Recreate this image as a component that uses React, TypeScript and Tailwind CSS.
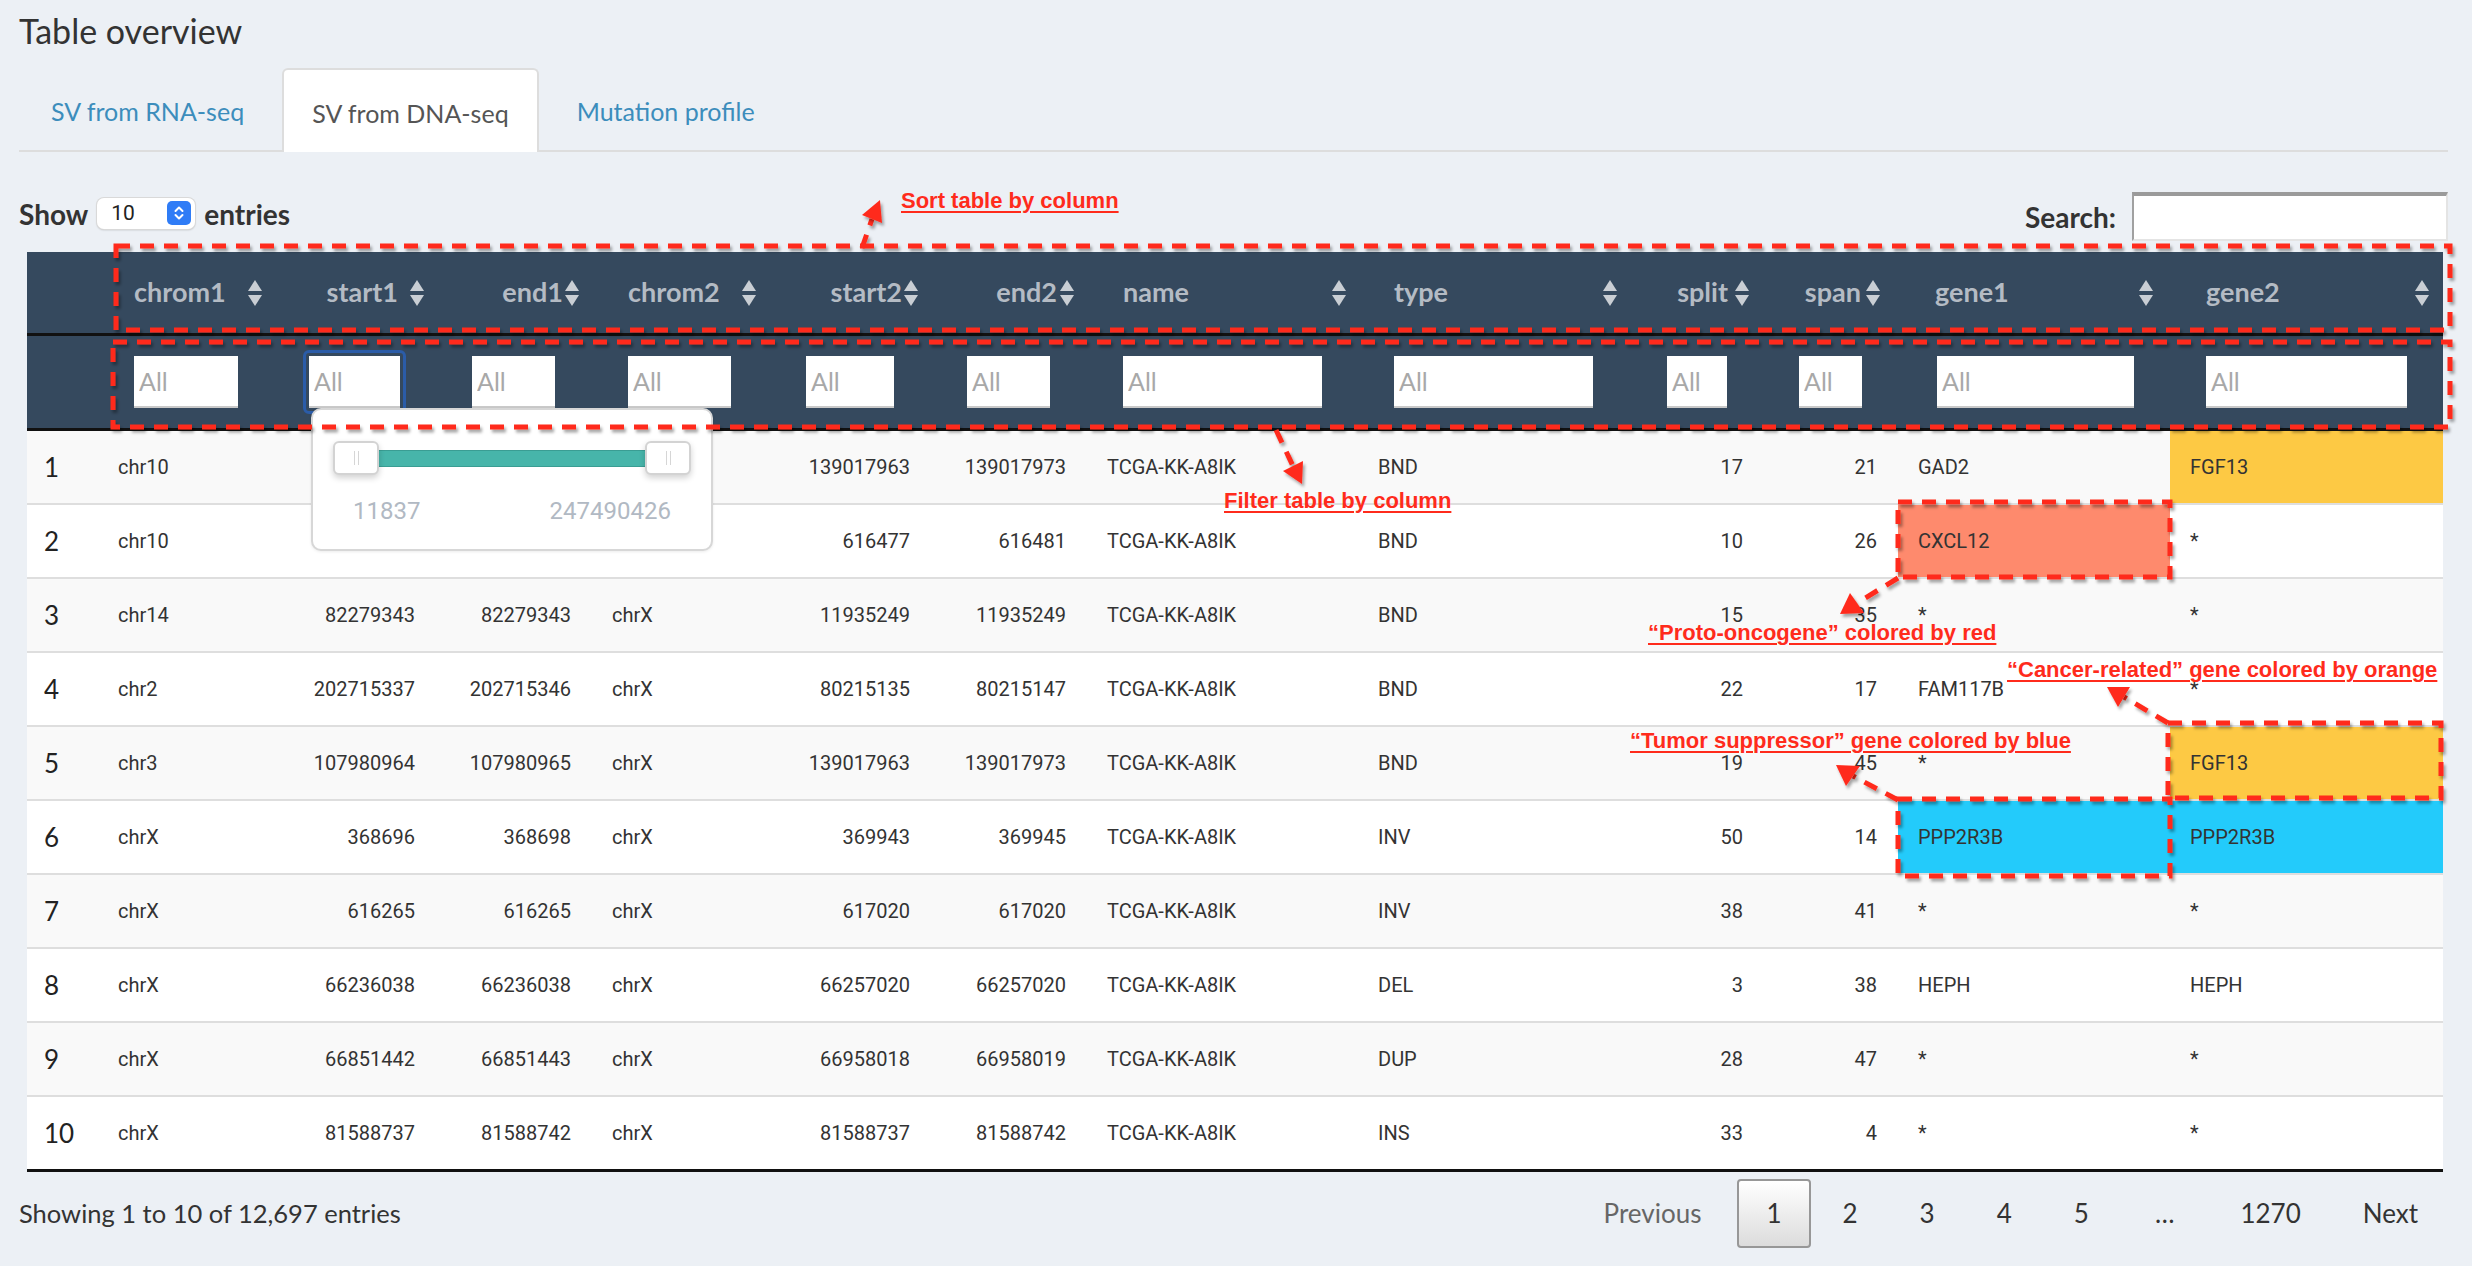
import React from "react";

const GRID =
  "grid grid-cols-[76px_181px_150px_162px_177px_154px_164px_272px_271px_126px_138px_272px_273px]";

type Col = {
  key: string;
  num: boolean;
  th: string;
  icon: string;
  td: string;
  input: string;
};

const COLS: Col[] = [
  { key: "chrom1", num: false, th: "pl-[31px]", icon: "right-[21px]", td: "pl-[15px]", input: "ml-[31px] w-[104px]" },
  { key: "start1", num: true, th: "pr-[36px]", icon: "right-[9px]", td: "pr-[19px]", input: "" },
  { key: "end1", num: true, th: "pr-[33px]", icon: "right-[16px]", td: "pr-[25px]", input: "ml-[38px] w-[83px]" },
  { key: "chrom2", num: false, th: "pl-[32px]", icon: "right-[16px]", td: "pl-[16px]", input: "ml-[32px] w-[103px]" },
  { key: "start2", num: true, th: "pr-[25px]", icon: "right-[8px]", td: "pr-[17px]", input: "ml-[33px] w-[88px]" },
  { key: "end2", num: true, th: "pr-[34px]", icon: "right-[16px]", td: "pr-[25px]", input: "ml-[40px] w-[83px]" },
  { key: "name", num: false, th: "pl-[32px]", icon: "right-[16px]", td: "pl-[16px]", input: "ml-[32px] w-[199px]" },
  { key: "type", num: false, th: "pl-[31px]", icon: "right-[16px]", td: "pl-[15px]", input: "ml-[31px] w-[199px]" },
  { key: "split", num: true, th: "pr-[32px]", icon: "right-[10px]", td: "pr-[17px]", input: "ml-[33px] w-[60px]" },
  { key: "span", num: true, th: "pr-[37px]", icon: "right-[17px]", td: "pr-[21px]", input: "ml-[39px] w-[63px]" },
  { key: "gene1", num: false, th: "pl-[37px]", icon: "right-[16px]", td: "pl-[20px]", input: "ml-[39px] w-[197px]" },
  { key: "gene2", num: false, th: "pl-[36px]", icon: "right-[13px]", td: "pl-[20px]", input: "ml-[36px] w-[201px]" },
];

const S = "TCGA-KK-A8IK";
const ROWS: string[][] = [
  ["chr10", "88941236", "88941240", "chrX", "139017963", "139017973", S, "BND", "17", "21", "GAD2", "FGF13"],
  ["chr10", "44865601", "44865603", "chrX", "616477", "616481", S, "BND", "10", "26", "CXCL12", "*"],
  ["chr14", "82279343", "82279343", "chrX", "11935249", "11935249", S, "BND", "15", "35", "*", "*"],
  ["chr2", "202715337", "202715346", "chrX", "80215135", "80215147", S, "BND", "22", "17", "FAM117B", "*"],
  ["chr3", "107980964", "107980965", "chrX", "139017963", "139017973", S, "BND", "19", "45", "*", "FGF13"],
  ["chrX", "368696", "368698", "chrX", "369943", "369945", S, "INV", "50", "14", "PPP2R3B", "PPP2R3B"],
  ["chrX", "616265", "616265", "chrX", "617020", "617020", S, "INV", "38", "41", "*", "*"],
  ["chrX", "66236038", "66236038", "chrX", "66257020", "66257020", S, "DEL", "3", "38", "HEPH", "HEPH"],
  ["chrX", "66851442", "66851443", "chrX", "66958018", "66958019", S, "DUP", "28", "47", "*", "*"],
  ["chrX", "81588737", "81588742", "chrX", "81588737", "81588742", S, "INS", "33", "4", "*", "*"],
];

// gene highlight colours: orange = cancer-related, salmon = proto-oncogene, blue = tumor suppressor
const HIGHLIGHT: Record<string, string> = {
  "0-11": "bg-[#fdc944]",
  "1-10": "bg-[#fe8a6d]",
  "4-11": "bg-[#fdc944]",
  "5-10": "bg-[#23cbfb]",
  "5-11": "bg-[#23cbfb]",
};

function SortIcon({ className = "" }: { className?: string }) {
  return (
    <svg width="16" height="28" viewBox="0 0 16 28" className={className}>
      <path d="M1 12 L8 1 L15 12 Z" fill="#c9ced4" />
      <path d="M1 16 L15 16 L8 27 Z" fill="#c9ced4" />
    </svg>
  );
}

function FilterInput({ className = "" }: { className?: string }) {
  return (
    <input
      readOnly
      placeholder="All"
      className={`h-[52px] border-b-2 border-[#c9c9c9] bg-white pl-[5px] font-['Lato',sans-serif] text-[25px] outline-none placeholder:text-[#a8a8a8] ${className}`}
    />
  );
}

function Handle() {
  return (
    <div className="relative z-10 flex h-[34px] w-[46px] shrink-0 items-center justify-center gap-[3px] rounded-[6px] border-2 border-[#d3d3d3] bg-white shadow-[0_3px_6px_rgba(0,0,0,0.18)]">
      <span className="h-[14px] w-px bg-[#d6d6d6]" />
      <span className="h-[14px] w-px bg-[#d6d6d6]" />
    </div>
  );
}

function RangePopup() {
  return (
    <div className="absolute left-[27px] top-[72px] z-20 h-[143px] w-[402px] rounded-[10px] border-2 border-[#d7d7d7] bg-white px-[20px] pt-[31px] shadow-[0_1px_3px_rgba(0,0,0,0.08)]">
      <div className="flex h-[34px] items-center">
        <Handle />
        <div className="-mx-[2px] h-[17px] flex-1 border-y border-[#3a9d93] bg-[#47b5aa]" />
        <Handle />
      </div>
      <div className="mt-[24px] flex justify-between px-[20px] font-['Roboto',sans-serif] text-[24px] leading-none text-[#b1b9c3]">
        <span>11837</span>
        <span>247490426</span>
      </div>
    </div>
  );
}

function DataTable() {
  return (
    <div className="relative ml-[8px] mt-[11px] w-[2416px] border-b-[3px] border-[#111]">
      {/* sortable header */}
      <div className={`${GRID} h-[84px] border-b-[3px] border-[#111] bg-[#35495e]`}>
        <div />
        {COLS.map((c) => (
          <div
            key={c.key}
            className={`relative flex h-full items-center text-[27px] font-bold text-[#b4bbc4] ${c.num ? "justify-end" : ""} ${c.th}`}
          >
            {c.key}
            <SortIcon className={`absolute top-1/2 -translate-y-1/2 ${c.icon}`} />
          </div>
        ))}
      </div>

      {/* column filters */}
      <div className={`${GRID} h-[95px] border-b-[3px] border-[#111] bg-[#35495e]`}>
        <div />
        {COLS.map((c) =>
          c.key === "start1" ? (
            <div key={c.key} className="relative flex h-full items-center">
              <div className="ml-[19px] h-[64px] w-[103px] rounded-[6px] border-[3px] border-[#2b5ca8] p-[3px]">
                <FilterInput className="w-full" />
              </div>
              <RangePopup />
            </div>
          ) : (
            <div key={c.key} className="flex h-full items-center">
              <FilterInput className={c.input} />
            </div>
          )
        )}
      </div>

      {ROWS.map((r, i) => (
        <div
          key={i}
          className={`${GRID} ${i === 0 ? "h-[72px]" : "h-[74px] border-t-2 border-[#dedede]"} ${i % 2 === 0 ? "bg-[#f9f9f9]" : "bg-white"}`}
        >
          <div className="flex items-center pl-[17px] text-[26px] text-[#222]">{i + 1}</div>
          {r.map((v, j) => {
            const c = COLS[j];
            const hl = HIGHLIGHT[`${i}-${j}`];
            return (
              <div
                key={j}
                className={`flex items-center font-['Roboto',sans-serif] text-[20px] text-[#333] ${c.num ? "justify-end" : ""} ${c.td} ${hl ?? ""}`}
              >
                {v}
              </div>
            );
          })}
        </div>
      ))}
    </div>
  );
}

function Pager() {
  const btn = "flex h-[69px] items-center border-2 border-transparent px-[28px] text-[#333]";
  return (
    <div className="flex items-center gap-[2px] text-[26px]">
      <span className={`${btn} px-[32px] text-[#666]`}>Previous</span>
      <span className="flex h-[69px] items-center rounded-[4px] border-2 border-[#979797] bg-gradient-to-b from-white to-[#dcdcdc] px-[27px] text-[#333]">
        1
      </span>
      <span className={btn}>2</span>
      <span className={btn}>3</span>
      <span className={btn}>4</span>
      <span className={btn}>5</span>
      <span className="px-[34px] text-[#333]">…</span>
      <span className={btn}>1270</span>
      <span className={btn}>Next</span>
    </div>
  );
}

function Annotations() {
  const red = "#ff2b1c";
  const label =
    "absolute whitespace-nowrap font-['Liberation_Sans',Arial,sans-serif] text-[22px] font-bold leading-none text-[#ff2b1c] underline decoration-2 underline-offset-[3px]";
  return (
    <div className="pointer-events-none absolute inset-0 z-30">
      <svg width="2472" height="1266" viewBox="0 0 2472 1266" className="absolute inset-0">
        <defs>
          <filter id="sh" x="-5%" y="-5%" width="110%" height="120%">
            <feDropShadow dx="2" dy="3" stdDeviation="1.6" floodColor="#000" floodOpacity="0.35" />
          </filter>
        </defs>
        <g filter="url(#sh)" stroke={red} strokeWidth="5" fill="none" strokeDasharray="14 10">
          <rect x="116" y="246" width="2334" height="84" />
          <rect x="113" y="342" width="2337" height="85" />
          <rect x="1898" y="502" width="272" height="75" />
          <rect x="2168" y="723" width="273" height="75" />
          <rect x="1898" y="799" width="272" height="77" />
          <path d="M862 248 L872 219" />
          <path d="M1276 430 L1293 466" />
          <path d="M1898 578 L1857 603" />
          <path d="M2168 723 L2124 697" />
          <path d="M1898 800 L1853 776" />
        </g>
        <g filter="url(#sh)" fill={red}>
          <path d="M880 200 L882 223 L862 215 Z" />
          <path d="M1302 484 L1303 461 L1283 471 Z" />
          <path d="M1840 614 L1864 613 L1850 593 Z" />
          <path d="M2107 687 L2130 687 L2118 707 Z" />
          <path d="M1836 765 L1860 766 L1846 786 Z" />
        </g>
      </svg>
      <span className={`${label} left-[901px] top-[190px]`}>Sort table by column</span>
      <span className={`${label} left-[1224px] top-[490px]`}>Filter table by column</span>
      <span className={`${label} left-[1648px] top-[622px]`}>“Proto-oncogene” colored by red</span>
      <span className={`${label} left-[2007px] top-[659px]`}>“Cancer-related” gene colored by orange</span>
      <span className={`${label} left-[1630px] top-[730px]`}>“Tumor suppressor” gene colored by blue</span>
    </div>
  );
}

export default function App() {
  return (
    <div className="relative h-[1266px] w-[2472px] overflow-hidden bg-[#ecf0f5] font-['Lato',sans-serif] text-[#333]">
      <div className="pl-[19px] pr-[24px] pt-[11px]">
        <h1 className="text-[34px] leading-[40px] text-[#333]">Table overview</h1>

        {/* tabs */}
        <div className="mt-[17px] flex h-[84px] items-end border-b-2 border-[#dddddd] text-[25px]">
          <div className="ml-[2px] mr-[12px] flex h-[82px] items-center pl-[30px] pr-[26px] pt-[5px] text-[#3c8dbc]">
            SV from RNA-seq
          </div>
          <div className="-mb-[2px] mr-[10px] flex h-[84px] items-center rounded-t-[6px] border-2 border-b-0 border-[#dddddd] bg-white px-[28px] pt-[5px] text-[#555]">
            SV from DNA-seq
          </div>
          <div className="flex h-[82px] items-center px-[28px] pt-[5px] text-[#3c8dbc]">Mutation profile</div>
        </div>

        {/* length + search */}
        <div className="mt-[40px] flex h-[49px] justify-between">
          <div className="mt-[6px] flex h-[31px] items-center text-[28px] font-bold text-[#333]">
            <span>Show</span>
            <div className="relative mx-[9px] flex h-[31px] w-[98px] items-center rounded-[7px] bg-white pl-[14px] shadow-[0_1px_2px_rgba(0,0,0,0.25)] ring-1 ring-[#d9d9d9]">
              <span className="font-['Roboto',sans-serif] text-[21px] font-normal text-[#222]">10</span>
              <span className="absolute right-[4px] top-[3px] flex h-[24px] w-[24px] items-center justify-center rounded-[5px] bg-[#2f7cf6]">
                <svg width="12" height="16" viewBox="0 0 12 16">
                  <path
                    d="M2.5 6 L6 2.5 L9.5 6 M2.5 10 L6 13.5 L9.5 10"
                    stroke="#fff"
                    strokeWidth="2"
                    fill="none"
                    strokeLinecap="round"
                    strokeLinejoin="round"
                  />
                </svg>
              </span>
            </div>
            <span>entries</span>
          </div>
          <div className="flex items-center gap-[16px]">
            <span className="text-[28px] font-bold text-[#333]">Search:</span>
            <input
              readOnly
              className="h-[49px] w-[316px] border-[#e4e4e4] border-b-2 border-l-2 border-r-2 border-t-[4px] border-l-[#a0a0a0] border-t-[#9a9a9a] bg-white outline-none"
            />
          </div>
        </div>

        <DataTable />

        <div className="mt-[7px] flex items-center justify-between">
          <span className="text-[25.5px] text-[#333]">Showing 1 to 10 of 12,697 entries</span>
          <Pager />
        </div>
      </div>

      <Annotations />
    </div>
  );
}
